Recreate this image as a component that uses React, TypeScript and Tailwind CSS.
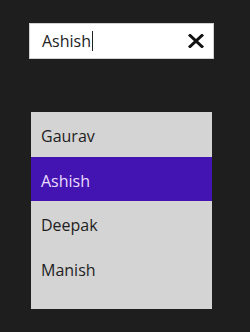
export default function App() {
  const names = ['Gaurav', 'Ashish', 'Deepak', 'Manish'];
  const selected = 'Ashish';

  return (
    <div className="w-[250px] h-[332px] bg-[#1e1e1e] pt-[23px] font-['Open_Sans',sans-serif]">
      {/* Search box */}
      <div className="ml-[29px] w-[185px] h-[36px] bg-white border border-[#d0d0d0] flex items-center pl-[12px] pr-[8px]">
        <span className="text-[16px] text-[#222] leading-none">Ashish</span>
        <span className="w-px h-[20px] bg-[#222] ml-px" />
        <svg className="ml-auto" width="18" height="14" viewBox="0 0 18 14" aria-hidden="true">
          <path d="M2 0.5 L16 13.5 M16 0.5 L2 13.5" stroke="#111" strokeWidth="3" fill="none" />
        </svg>
      </div>

      {/* Suggestions */}
      <ul className="ml-[31px] mt-[53px] w-[181px] h-[197px] bg-[#d4d4d4]">
        {names.map((name) => (
          <li
            key={name}
            className={
              name === selected
                ? 'h-[44.5px] flex items-center pl-[10px] pt-[4px] bg-[#4414b2] text-[#eadcff] text-[16px]'
                : 'h-[44.5px] flex items-center pl-[10px] pt-[4px] text-[#1e1e1e] text-[16px]'
            }
          >
            {name}
          </li>
        ))}
      </ul>
    </div>
  );
}
